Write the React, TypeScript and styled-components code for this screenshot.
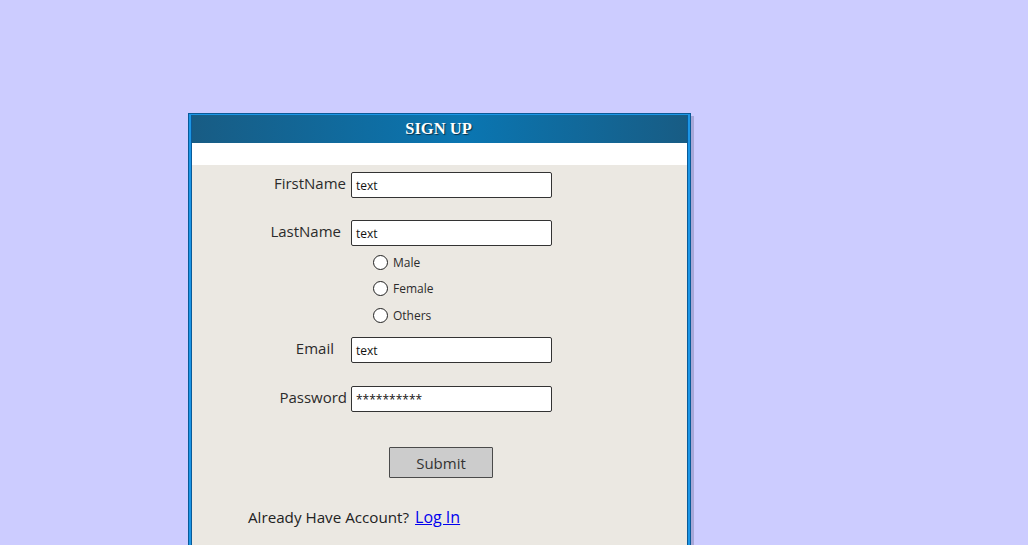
import React from "react";
import styled, { createGlobalStyle } from "styled-components";

const Global = createGlobalStyle`
  html, body { margin: 0; padding: 0; overflow: hidden; }
  body { background: #ccccff; font-family: "Open Sans", "DejaVu Sans", sans-serif; }
`;

const Page = styled.div`
  height: 545px;
  padding: 113px 0 0 188px;
  box-sizing: border-box;
  overflow: hidden;
`;

const Card = styled.div`
  width: 503px;
  box-sizing: border-box;
  border: 1px solid #0a5a98;
  border-bottom: none;
  padding: 1px 2px 0 2px;
  background: #1c96e6;
  box-shadow: 3px 3px 0 rgba(0, 0, 40, 0.18);
`;

const Inner = styled.div`
  border: 1px solid #0a5a98;
  border-top: none;
  border-bottom: none;
  background: #ebe8e2;
  min-height: 460px;
`;

const Header = styled.div`
  height: 28px;
  box-sizing: border-box;
  padding: 0 2px 1px 0;
  display: flex;
  align-items: center;
  justify-content: center;
  background: linear-gradient(90deg, #185c84 0%, #0a76b2 55%, #185c84 100%);
  color: #ffffff;
  font-family: "Liberation Serif", "DejaVu Serif", serif;
  font-weight: bold;
  font-size: 16.5px;
  text-shadow: 1px 1px 1px rgba(0, 0, 0, 0.6);
`;

const Strip = styled.div`
  height: 22px;
  background: #ffffff;
`;

const Body = styled.div`
  display: flex;
  flex-direction: column;
  padding-top: 7px;
  color: #333333;
`;

const FieldRow = styled.div<{ $mt: number }>`
  display: grid;
  grid-template-columns: 155px 201px;
  column-gap: 4px;
  align-items: center;
  margin-top: ${(p) => p.$mt}px;
`;

const Label = styled.label<{ $pr: number }>`
  justify-self: end;
  padding-right: ${(p) => p.$pr}px;
  font-size: 15px;
  line-height: 20px;
  margin-top: -4px;
  color: #2b2b2b;
`;

const TextInput = styled.div`
  height: 26px;
  box-sizing: border-box;
  border: 1px solid #333333;
  border-bottom-width: 1.5px;
  border-radius: 2px;
  background: #ffffff;
  display: flex;
  align-items: center;
  padding: 1px 0 0 4px;
  font-size: 12px;
  color: #111111;
`;

const RadioGroup = styled.div`
  display: flex;
  flex-direction: column;
  margin: 3px 0 0 181px;
`;

const RadioRow = styled.div`
  height: 26.5px;
  display: flex;
  align-items: center;
  gap: 5px;
  font-size: 12px;
  color: #2b2b2b;
`;

const Circle = styled.span`
  width: 15px;
  height: 15px;
  box-sizing: border-box;
  border: 1.5px solid #222222;
  border-radius: 50%;
  background: #ffffff;
`;

const ButtonRow = styled.div`
  display: flex;
  justify-content: center;
  margin-top: 35px;
`;

const Button = styled.button`
  width: 104px;
  height: 31px;
  box-sizing: border-box;
  background: #cccccc;
  border: 1px solid #4a4a4a;
  border-bottom-width: 1.5px;
  border-radius: 1px;
  font-family: inherit;
  font-size: 15px;
  color: #333333;
  padding: 0;
  margin-left: 3px;
`;

const Footer = styled.div`
  margin: 29px 0 0 56px;
  font-size: 15.2px;
  line-height: 20px;
  color: #222222;
  display: flex;
  align-items: baseline;
  gap: 6px;
`;

const Link = styled.a`
  color: #0000ee;
  font-size: 16px;
  text-decoration: underline;
`;

const fields1 = [
  { label: "FirstName", pr: 1, mt: 0, value: "text" },
  { label: "LastName", pr: 6, mt: 22, value: "text" },
];

const fields2 = [
  { label: "Email", pr: 13, mt: 8.5, value: "text" },
  { label: "Password", pr: 0, mt: 23, value: "**********" },
];

export default function App() {
  return (
    <>
      <Global />
      <Page>
        <Card>
          <Inner>
            <Header>SIGN UP</Header>
            <Strip />
            <Body>
              {fields1.map((f) => (
                <FieldRow key={f.label} $mt={f.mt}>
                  <Label $pr={f.pr}>{f.label}</Label>
                  <TextInput>{f.value}</TextInput>
                </FieldRow>
              ))}
              <RadioGroup>
                {["Male", "Female", "Others"].map((r) => (
                  <RadioRow key={r}>
                    <Circle />
                    {r}
                  </RadioRow>
                ))}
              </RadioGroup>
              {fields2.map((f) => (
                <FieldRow key={f.label} $mt={f.mt}>
                  <Label $pr={f.pr}>{f.label}</Label>
                  <TextInput>{f.value}</TextInput>
                </FieldRow>
              ))}
              <ButtonRow>
                <Button>Submit</Button>
              </ButtonRow>
              <Footer>
                Already Have Account? <Link href="#">Log In</Link>
              </Footer>
            </Body>
          </Inner>
        </Card>
      </Page>
    </>
  );
}
